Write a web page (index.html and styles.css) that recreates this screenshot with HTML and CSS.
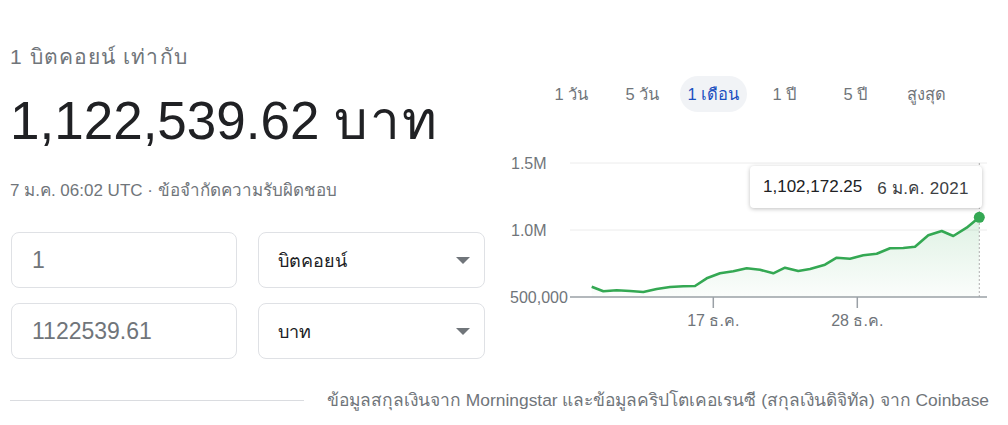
FILE: index.html
```html
<!DOCTYPE html>
<html lang="th">
<head>
    <meta charset="UTF-8">
    <meta name="viewport" content="width=device-width, initial-scale=1.0">
    <title>แปลงสกุลเงิน</title>
    <link rel="stylesheet" href="styles.css">
</head>
<body>

    <div class="converter">
        <div class="left-col">
            <div class="rate-label">1 บิตคอยน์ เท่ากับ</div>
            <div class="rate-value">1,122,539.62 <span class="unit">บาท</span></div>
            <div class="rate-meta">7 ม.ค. 06:02 UTC · <span class="disclaimer">ข้อจำกัดความรับผิดชอบ</span></div>

            <div class="field-row first">
                <div class="field amount">1</div>
                <div class="field select">
                    <span>บิตคอยน์</span>
                    <span class="caret"></span>
                </div>
            </div>
            <div class="field-row">
                <div class="field amount">1122539.61</div>
                <div class="field select">
                    <span>บาท</span>
                    <span class="caret"></span>
                </div>
            </div>
        </div>

        <div class="right-col">
            <div class="tabs">
                <div class="tab">1 วัน</div>
                <div class="tab">5 วัน</div>
                <div class="tab active">1 เดือน</div>
                <div class="tab">1 ปี</div>
                <div class="tab">5 ปี</div>
                <div class="tab">สูงสุด</div>
            </div>

            <div class="chart">
                <svg width="500" height="200" viewBox="0 0 500 200">
                    <defs>
                        <linearGradient id="areaFill" x1="0" y1="0" x2="0" y2="1">
                            <stop offset="0" stop-color="#34a853" stop-opacity="0.16"/>
                            <stop offset="1" stop-color="#34a853" stop-opacity="0.02"/>
                        </linearGradient>
                    </defs>
                    <!-- grid -->
                    <line x1="70" y1="23" x2="487" y2="23" stroke="#ececec" stroke-width="1"/>
                    <line x1="70" y1="90" x2="487" y2="90" stroke="#ececec" stroke-width="1"/>
                    <text class="axis-label" x="11" y="29">1.5M</text>
                    <text class="axis-label" x="11" y="96">1.0M</text>
                    <text class="axis-label" x="10" y="163">500,000</text>

                    <!-- area + line -->
                    <polygon fill="url(#areaFill)" points="91.7,157 91.7,146.7 103.3,151.3 116.7,150.3 130,151 143.3,152 156.7,149 170,147 183.3,146.3 195,146 206.7,138.3 220,133.3 233.3,131.3 246.7,128.3 260,129.7 273.3,133.3 285,127.7 298.3,131 310,129 325,124.7 336.7,117.7 350,118.7 363.3,115.3 376.7,113.7 390,108.3 403.3,108 415,106.7 428.3,95.3 441.7,91 453.3,96 466.7,87.7 479.3,77.3 479.3,157"/>
                    <line x1="479.3" y1="23" x2="479.3" y2="157" stroke="#b0b0b0" stroke-width="1" stroke-dasharray="2,2"/>
                    <polyline fill="none" stroke="#34a853" stroke-width="2.6" stroke-linejoin="round" points="91.7,146.7 103.3,151.3 116.7,150.3 130,151 143.3,152 156.7,149 170,147 183.3,146.3 195,146 206.7,138.3 220,133.3 233.3,131.3 246.7,128.3 260,129.7 273.3,133.3 285,127.7 298.3,131 310,129 325,124.7 336.7,117.7 350,118.7 363.3,115.3 376.7,113.7 390,108.3 403.3,108 415,106.7 428.3,95.3 441.7,91 453.3,96 466.7,87.7 479.3,77.3"/>

                    <!-- x axis -->
                    <line x1="70" y1="157" x2="487" y2="157" stroke="#9aa0a6" stroke-width="1.5"/>
                    <line x1="213.3" y1="157" x2="213.3" y2="168" stroke="#9aa0a6" stroke-width="1.5"/>
                    <line x1="357.3" y1="157" x2="357.3" y2="168" stroke="#9aa0a6" stroke-width="1.5"/>
                    <text class="axis-label" x="213.3" y="186" text-anchor="middle">17 ธ.ค.</text>
                    <text class="axis-label" x="357.3" y="186" text-anchor="middle">28 ธ.ค.</text>

                    <circle cx="479.3" cy="77.3" r="5.5" fill="#34a853"/>
                </svg>

                <div class="tooltip">
                    <span class="tip-value">1,102,172.25</span>
                    <span class="tip-date">6 ม.ค. 2021</span>
                </div>
            </div>
        </div>
    </div>

    <div class="source">
        <div class="source-rule"></div>
        <div class="source-text">ข้อมูลสกุลเงินจาก Morningstar และข้อมูลคริปโตเคอเรนซี (สกุลเงินดิจิทัล) จาก Coinbase</div>
    </div>

</body>
</html>
```

FILE: styles.css
```css
body {
    margin: 0;
    font-family: "Liberation Sans", Arial, Tahoma, Waree, sans-serif;
    color: #202124;
    background: #fff;
}
.converter {
    display: flex;
    height: 370px;
}
.left-col {
    width: 500px;
    padding-left: 10px;
    box-sizing: border-box;
}
.rate-label {
    margin-top: 44px;
    font-size: 21px;
    line-height: 26px;
    letter-spacing: 1.1px;
    color: #70757a;
}
.rate-value {
    margin-top: 21px;
    font-size: 53px;
    line-height: 60px;
    color: #202124;
}
.rate-value .unit {
    letter-spacing: 2px;
}
.rate-meta {
    margin-top: 29px;
    font-size: 17px;
    line-height: 22px;
    color: #70757a;
}
.field-row {
    display: flex;
    gap: 21px;
    margin-top: 15px;
}
.field-row.first {
    margin-top: 30px;
}
.field {
    height: 56px;
    box-sizing: border-box;
    border: 1px solid #dfe1e5;
    border-radius: 8px;
    display: flex;
    align-items: center;
}
.field.amount {
    width: 226px;
    margin-left: 1px;
    padding-left: 20px;
    font-size: 23px;
    color: #70757a;
}
.field.select {
    width: 227px;
    padding: 0 14px 0 19px;
    justify-content: space-between;
    font-size: 18px;
    color: #202124;
}
.caret {
    width: 0;
    height: 0;
    border-left: 7px solid transparent;
    border-right: 7px solid transparent;
    border-top: 7px solid #70757a;
}
.right-col {
    width: 500px;
}
.tabs {
    display: flex;
    margin-top: 76px;
    padding-left: 36px;
}
.tab {
    width: 67px;
    height: 36px;
    margin: 0 2px;
    border-radius: 18px;
    display: flex;
    align-items: center;
    justify-content: center;
    font-size: 16.5px;
    color: #70757a;
}
.tab.active {
    background: #f1f3f6;
    color: #1a4fc0;
}
.chart {
    position: relative;
    margin-top: 28px;
    height: 200px;
}
.chart svg {
    display: block;
}
.axis-label {
    font-family: "Liberation Sans", Arial, sans-serif;
    font-size: 16px;
    fill: #70757a;
}
.tooltip {
    position: absolute;
    left: 250px;
    top: 26px;
    width: 232px;
    height: 42px;
    box-sizing: border-box;
    background: #fff;
    border-radius: 4px;
    box-shadow: 0 1px 4px rgba(0, 0, 0, 0.25);
    display: flex;
    align-items: center;
    padding-left: 13px;
    font-size: 17px;
    color: #202124;
}
.tip-date {
    margin-left: 15px;
    letter-spacing: 0.3px;
    color: #3c4043;
}
.source {
    display: flex;
    align-items: center;
    margin-top: 16px;
}
.source-rule {
    width: 294px;
    margin-left: 10px;
    border-top: 1px solid #dadce0;
}
.source-text {
    margin-left: 23px;
    font-size: 17.4px;
    color: #70757a;
}
```
